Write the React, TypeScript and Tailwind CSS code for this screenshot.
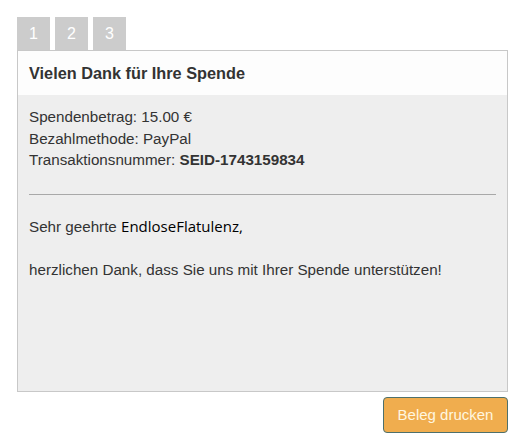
export default function App() {
  return (
    <div className="w-[517px] h-[442px] bg-white pl-[17px] pt-[17px] pr-[9px]" style={{ fontFamily: '"Liberation Sans", Arial, sans-serif' }}>
      <div className="flex gap-[5px]">
        {["1", "2", "3"].map((t) => (
          <div key={t} className="w-[33px] h-[33px] bg-[#cccccc] text-white text-[16px] flex items-center justify-center">
            {t}
          </div>
        ))}
      </div>
      <div className="w-[491px] h-[342px] border border-[#c8c8c8] flex flex-col">
        <div className="h-[44px] bg-[#fdfdfd] flex items-center px-[11px] text-[16.3px] font-bold text-[#333333]">
          Vielen Dank für Ihre Spende
        </div>
        <div className="flex-1 bg-[#eeeeee] px-[11px] pt-[11px] text-[15.2px] leading-[21.5px] text-[#333333]">
          <div>Spendenbetrag: 15.00 €</div>
          <div>Bezahlmethode: PayPal</div>
          <div>
            Transaktionsnummer: <span className="font-bold">SEID-1743159834</span>
          </div>
          <div className="h-px bg-[#a8a8a8] mt-[23px] mb-[21px]" />
          <div>
            Sehr geehrte{" "}
            <span className="text-[15px] text-black" style={{ fontFamily: '"Open Sans", sans-serif' }}>
              EndloseFlatulenz,
            </span>
          </div>
          <div className="mt-[21.5px]">herzlichen Dank, dass Sie uns mit Ihrer Spende unterstützen!</div>
        </div>
      </div>
      <div className="flex justify-end mt-[5px] w-[491px]">
        <button className="w-[125px] h-[36px] bg-[#f0ad4e] border border-[#4d706c] rounded-[4px] text-[#fff7e0] text-[15px]">
          Beleg drucken
        </button>
      </div>
    </div>
  );
}
